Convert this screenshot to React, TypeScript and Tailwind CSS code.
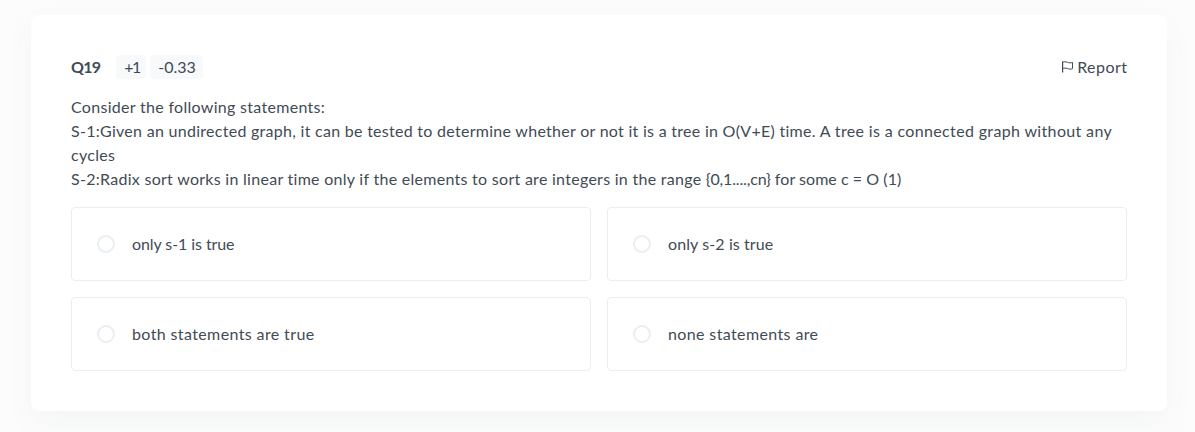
const options = [
  { label: "only s-1 is true", tracking: "tracking-[-0.08px]" },
  { label: "only s-2 is true", tracking: "tracking-[0.1px]" },
  { label: "both statements are true", tracking: "tracking-[0.38px]" },
  { label: "none statements are", tracking: "tracking-[0.38px]" },
];

function FlagIcon() {
  return (
    <svg className="h-3 w-[11px]" viewBox="0 0 11 12" fill="none" stroke="currentColor" strokeWidth="1">
      <path d="M0.6 0.5V11.5" strokeWidth="1.2" />
      <path d="M0.5 1.2C2.2 0.5 3.6 0.7 5.4 1.3S8.6 2.1 10.5 1.4V7.7C8.6 8.4 7.2 8.1 5.4 7.5S2.2 7 0.5 7.7" />
    </svg>
  );
}

export default function App() {
  return (
    <div className="h-[432px] w-full overflow-hidden bg-[#fcfcfc] pt-[15px] pr-7 pl-[31px] font-['Lato','Liberation_Sans',sans-serif] text-base leading-6 text-[#3f4b55]">
      <main className="h-[396px] rounded-lg bg-white px-10 pt-10 shadow-[0_12px_32px_rgba(60,95,125,0.045)]">
        <header className="flex h-6 items-center">
          <h1 className="w-[45px] font-bold tracking-[-0.7px]">Q19</h1>
          <span className="flex h-6 w-[30px] items-center justify-center rounded bg-[#f7f9fb] pl-0.5 tracking-[-1.5px]">+1</span>
          <span className="ml-1 flex h-6 w-[53px] items-center justify-center rounded bg-[#f7f9fb] pl-px">-0.33</span>
          <button className="ml-auto flex items-center gap-1">
            <FlagIcon />
            <span className="-mr-[0.4px] tracking-[0.45px]">Report</span>
          </button>
        </header>
        <div className="mt-4 whitespace-nowrap">
          <p className="tracking-[0.3px]">Consider the following statements:</p>
          <p>
            <span className="tracking-[0.28px]">
              S-1:Given an undirected graph, it can be tested to determine whether or not it is a tree in O(V+E) time.
            </span>
            <span className="tracking-[0.35px]"> A tree is a connected graph without any</span>
          </p>
          <p className="tracking-[0.3px]">cycles</p>
          <p>
            <span className="tracking-[0.28px]">
              S-2:Radix sort works in linear time only if the elements to sort are integers in the range{" "}
            </span>
            <span className="tracking-[-0.15px]">{"{0,1....,cn}"}</span>
            <span className="tracking-[0.05px]"> for some c = O (1)</span>
          </p>
        </div>
        <div className="mt-4 grid grid-cols-2 gap-4">
          {options.map((option) => (
            <label key={option.label} className="flex h-[74px] items-center rounded border border-[#e9eef2] pl-[25px]">
              <span className="h-[18px] w-[18px] rounded-full border-2 border-[#e9eef2]" />
              <span className={`ml-[17px] ${option.tracking}`}>{option.label}</span>
            </label>
          ))}
        </div>
      </main>
    </div>
  );
}
